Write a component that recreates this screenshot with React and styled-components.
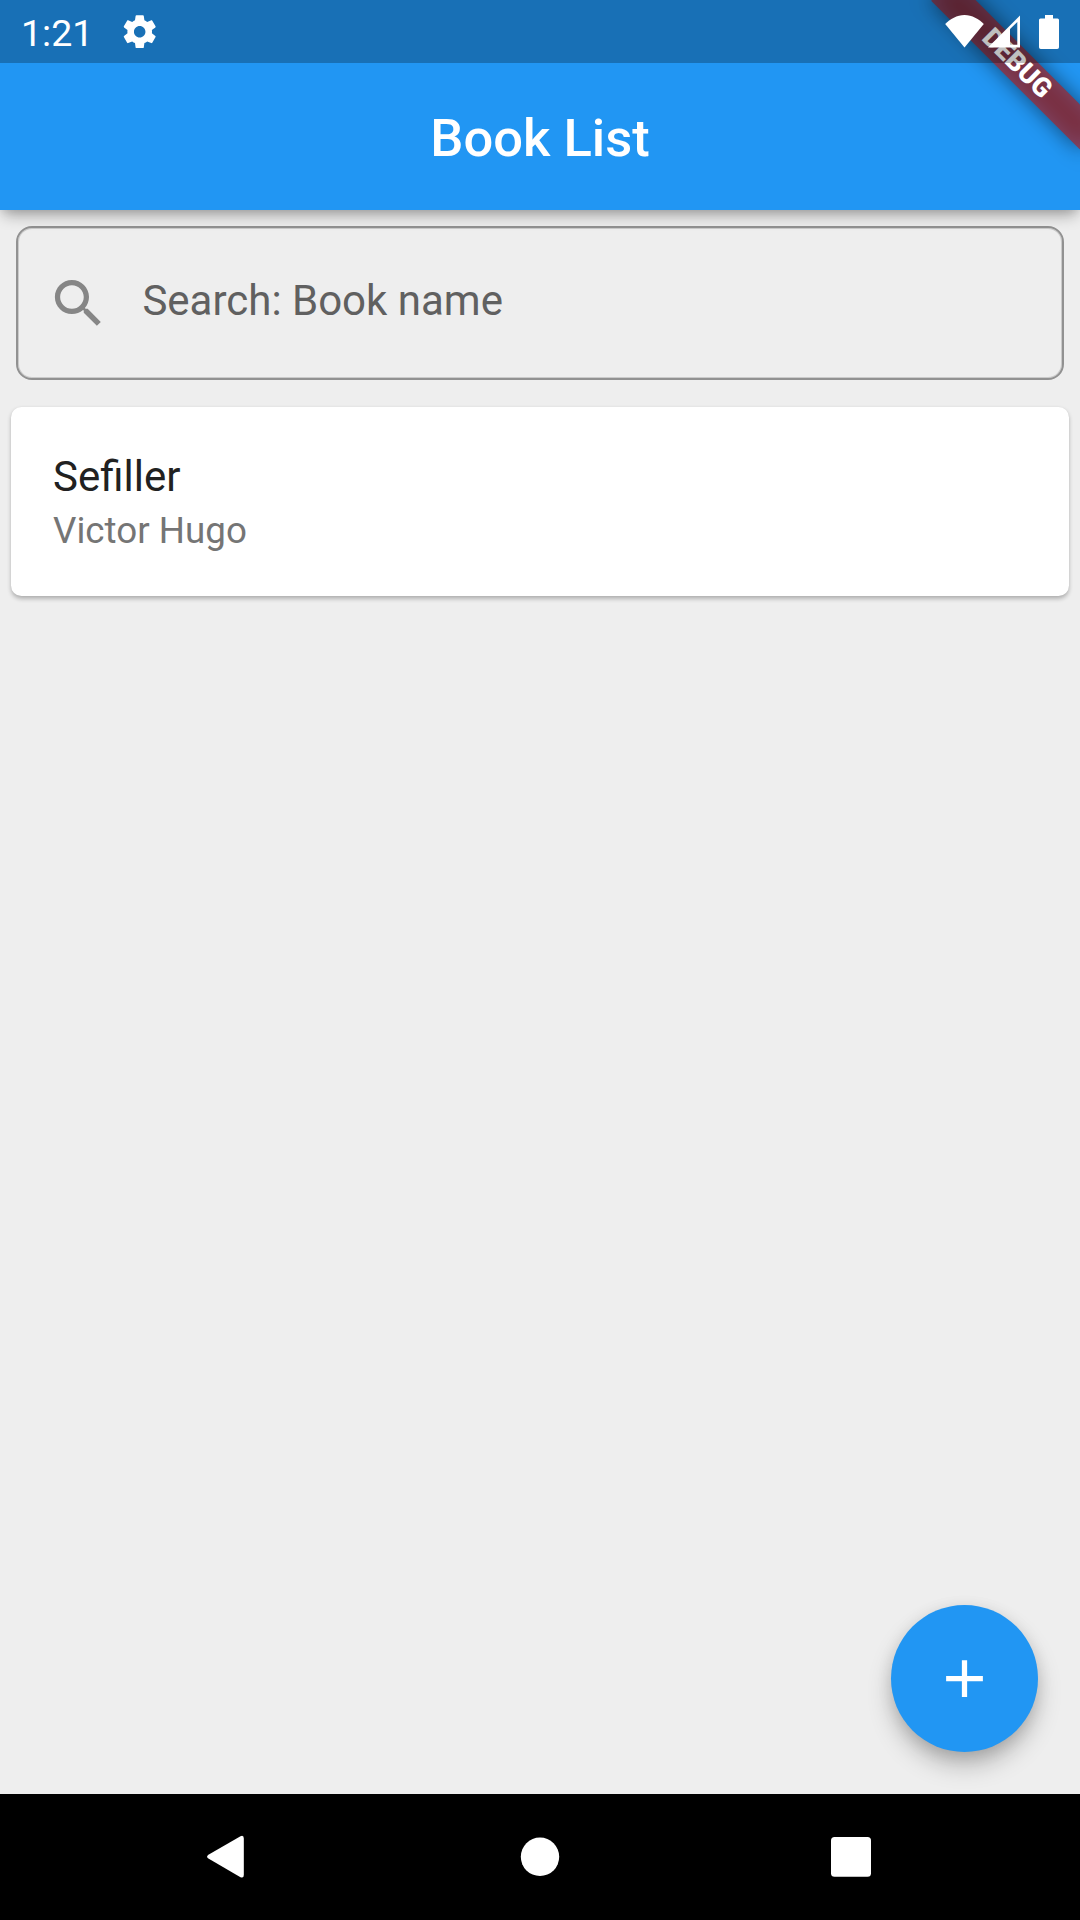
import React from "react";
import styled, { createGlobalStyle } from "styled-components";

const GlobalStyle = createGlobalStyle`
  html, body { margin: 0; padding: 0; }
  body {
    font-family: Roboto, "Noto Sans", sans-serif;
    background: #eeeeee;
    -webkit-font-smoothing: antialiased;
  }
  *, *::before, *::after { box-sizing: border-box; }
`;

const Screen = styled.div`
  position: relative;
  display: flex;
  flex-direction: column;
  width: 1080px;
  height: 1920px;
  overflow: hidden;
  background: #eeeeee;
`;

const Header = styled.header`
  position: relative;
  z-index: 1;
  display: flex;
  flex-direction: column;
  flex: none;
  background: #2196f3;
  box-shadow: 0 9px 14px -4px rgba(0, 0, 0, 0.32), 0 2px 8px rgba(0, 0, 0, 0.07);
`;

const StatusBar = styled.div`
  position: relative;
  z-index: 2;
  display: flex;
  align-items: center;
  height: 63px;
  padding: 0 21px 0 21px;
  background: rgba(0, 0, 0, 0.25);
  color: #fff;
`;

const Clock = styled.span`
  width: 66px;
  font-size: 37.5px;
  line-height: 44px;
  padding-top: 2px;
  white-space: nowrap;
`;

const StatusIcons = styled.div`
  display: flex;
  align-items: center;
  margin-left: auto;
`;

const Glyph = styled.svg`
  display: block;
  flex: none;
  width: ${(p) => p.$w}px;
  height: ${(p) => p.$h}px;
  margin-left: ${(p) => p.$gap || 0}px;
  fill: ${(p) => p.$color || "#fff"};
`;

const TitleBar = styled.div`
  display: flex;
  align-items: center;
  justify-content: center;
  height: 147px;
  padding-top: 2px;
`;

const Title = styled.h1`
  margin: 0;
  color: #fff;
  font-size: 52.5px;
  font-weight: 500;
  line-height: 62px;
`;

const BannerCorner = styled.div`
  position: absolute;
  z-index: 1;
  top: 0;
  right: 0;
  width: 210px;
  height: 210px;
  overflow: hidden;
`;

const Ribbon = styled.div`
  position: absolute;
  top: 73.5px;
  left: 105px;
  width: 210px;
  height: 31.5px;
  transform-origin: 105px -73.5px;
  transform: rotate(45deg);

  &::before {
    content: "";
    position: absolute;
    inset: 0;
    background: rgba(0, 0, 0, 0.5);
    filter: blur(10.4px);
  }
`;

const RibbonLabel = styled.span`
  position: relative;
  display: flex;
  align-items: center;
  justify-content: center;
  height: 100%;
  background: rgba(183, 28, 28, 0.627);
  color: #fff;
  font-size: 26.8px;
  font-weight: 900;
  line-height: 1;
`;

const Content = styled.main`
  display: flex;
  flex: 1;
  flex-direction: column;
  gap: 27px;
  padding: 16px 11px 0;
`;

const SearchField = styled.label`
  display: flex;
  align-items: center;
  height: 154px;
  margin: 0 5px;
  padding-left: 29.4px;
  border: 2px solid #919191;
  border-radius: 16px;
  box-shadow: inset 0 0 0 1px #cacaca;
  color: #606060;
  font-size: 42px;
  line-height: 50px;
`;

const SearchHint = styled.span`
  margin-left: 32px;
  transform: translateY(-2px);
`;

const BookCard = styled.article`
  display: flex;
  flex-direction: column;
  height: 189px;
  padding: 45px 42px 0;
  border-radius: 10.5px;
  background: #fff;
  box-shadow: 0 2.5px 4px rgba(0, 0, 0, 0.24), 0 1px 3px rgba(0, 0, 0, 0.04);
`;

const BookName = styled.span`
  color: #212121;
  font-size: 42px;
  line-height: 50px;
`;

const BookAuthor = styled.span`
  margin-top: 7px;
  color: #757575;
  font-size: 36.75px;
  line-height: 44px;
`;

const AddButton = styled.button`
  position: absolute;
  right: 42px;
  bottom: 168px;
  display: flex;
  align-items: center;
  justify-content: center;
  width: 147px;
  height: 147px;
  padding: 0;
  border: 0;
  border-radius: 50%;
  background: #2196f3;
  box-shadow: 0 14px 26px -3px rgba(0, 0, 0, 0.29), 0 3px 16px rgba(0, 0, 0, 0.09);
`;

const NavBar = styled.nav`
  position: relative;
  display: flex;
  align-items: center;
  flex: none;
  height: 126px;
  background: #000;
`;

const SETTINGS =
  "M19.43 12.98c.04-.32.07-.64.07-.98s-.03-.66-.07-.98l2.11-1.65c.19-.15.24-.42.12-.64l-2-3.46c-.12-.22-.39-.3-.61-.22l-2.49 1c-.52-.4-1.08-.73-1.69-.98l-.38-2.65C14.46 2.18 14.25 2 14 2h-4c-.25 0-.46.18-.49.42l-.38 2.65c-.61.25-1.17.59-1.69.98l-2.49-1c-.23-.09-.49 0-.61.22l-2 3.46c-.13.22-.07.49.12.64l2.11 1.65c-.04.32-.07.65-.07.98s.03.66.07.98l-2.11 1.65c-.19.15-.24.42-.12.64l2 3.46c.12.22.39.3.61.22l2.49-1c.52.4 1.08.73 1.69.98l.38 2.65c.03.24.24.42.49.42h4c.25 0 .46-.18.49-.42l.38-2.65c.61-.25 1.17-.59 1.69-.98l2.49 1c.23.09.49 0 .61-.22l2-3.46c.12-.22.07-.49-.12-.64l-2.11-1.65zM12 15.5c-1.93 0-3.5-1.57-3.5-3.5s1.57-3.5 3.5-3.5 3.5 1.57 3.5 3.5-1.57 3.5-3.5 3.5z";
const SEARCH =
  "M15.5 14h-.79l-.28-.27C15.41 12.59 16 11.11 16 9.5 16 5.91 13.09 3 9.5 3S3 5.91 3 9.5 5.91 16 9.5 16c1.61 0 3.09-.59 4.23-1.57l.27.28v.79l5 4.99L20.49 19l-4.99-5zm-6 0C7.01 14 5 11.99 5 9.5S7.01 5 9.5 5 14 7.01 14 9.5 11.99 14 9.5 14z";

const books = [{ name: "Sefiller", author: "Victor Hugo" }];

export default function App() {
  return (
    <>
      <GlobalStyle />
      <Screen>
        <Header>
          <BannerCorner>
            <Ribbon>
              <RibbonLabel>DEBUG</RibbonLabel>
            </Ribbon>
          </BannerCorner>
          <StatusBar>
            <Clock>1:21</Clock>
            <Glyph $w={39.4} $h={39.4} $gap={33.4} viewBox="0 0 24 24">
              <path d={SETTINGS} />
            </Glyph>
            <StatusIcons>
              <Glyph $w={39} $h={34} viewBox="0 0 39 34">
                <path d="M19.5 32.5 0.2 9C5 4 12 0 19.5 0S34 4 38.8 9Z" />
              </Glyph>
              <Glyph $w={33} $h={34} $gap={4} viewBox="0 0 33 34">
                <path fillRule="evenodd" d="M0 32.5 32 0.5V32.5ZM22 14.1V29.7H29.3V7.1Z" />
              </Glyph>
              <Glyph $w={20} $h={34} $gap={18} viewBox="0 0 20 34">
                <path d="M6 0H14V3.4H18.5Q20 3.4 20 5V32.2Q20 34 18.2 34H1.8Q0 34 0 32.2V5Q0 3.4 1.5 3.4H6Z" />
              </Glyph>
            </StatusIcons>
          </StatusBar>
          <TitleBar>
            <Title>Book List</Title>
          </TitleBar>
        </Header>
        <Content>
          <SearchField>
            <Glyph $w={63} $h={63} $color="#868686" viewBox="0 0 24 24">
              <path d={SEARCH} />
            </Glyph>
            <SearchHint>Search: Book name</SearchHint>
          </SearchField>
          {books.map((book) => (
            <BookCard key={book.name}>
              <BookName>{book.name}</BookName>
              <BookAuthor>{book.author}</BookAuthor>
            </BookCard>
          ))}
        </Content>
        <AddButton aria-label="Add">
          <Glyph $w={63} $h={63} viewBox="0 0 24 24">
            <path d="M19 13h-6v6h-2v-6H5v-2h6V5h2v6h6v2z" />
          </Glyph>
        </AddButton>
        <NavBar>
          <Glyph $w={38} $h={44} $gap={206} viewBox="0 0 38 44">
            <path d="M34.5 1.2Q37.8 -0.2 37.8 3.5V40Q37.8 43.6 34.5 42.2L2.4 23.6Q-0.2 21.6 2.4 19.8Z" />
          </Glyph>
          <Glyph $w={40} $h={40} $gap={276} viewBox="0 0 40 40">
            <circle cx="20" cy="19.8" r="19.2" />
          </Glyph>
          <Glyph $w={40} $h={40} $gap={271} viewBox="0 0 40 40">
            <rect width="40" height="39.7" rx="3.5" />
          </Glyph>
        </NavBar>
      </Screen>
    </>
  );
}
